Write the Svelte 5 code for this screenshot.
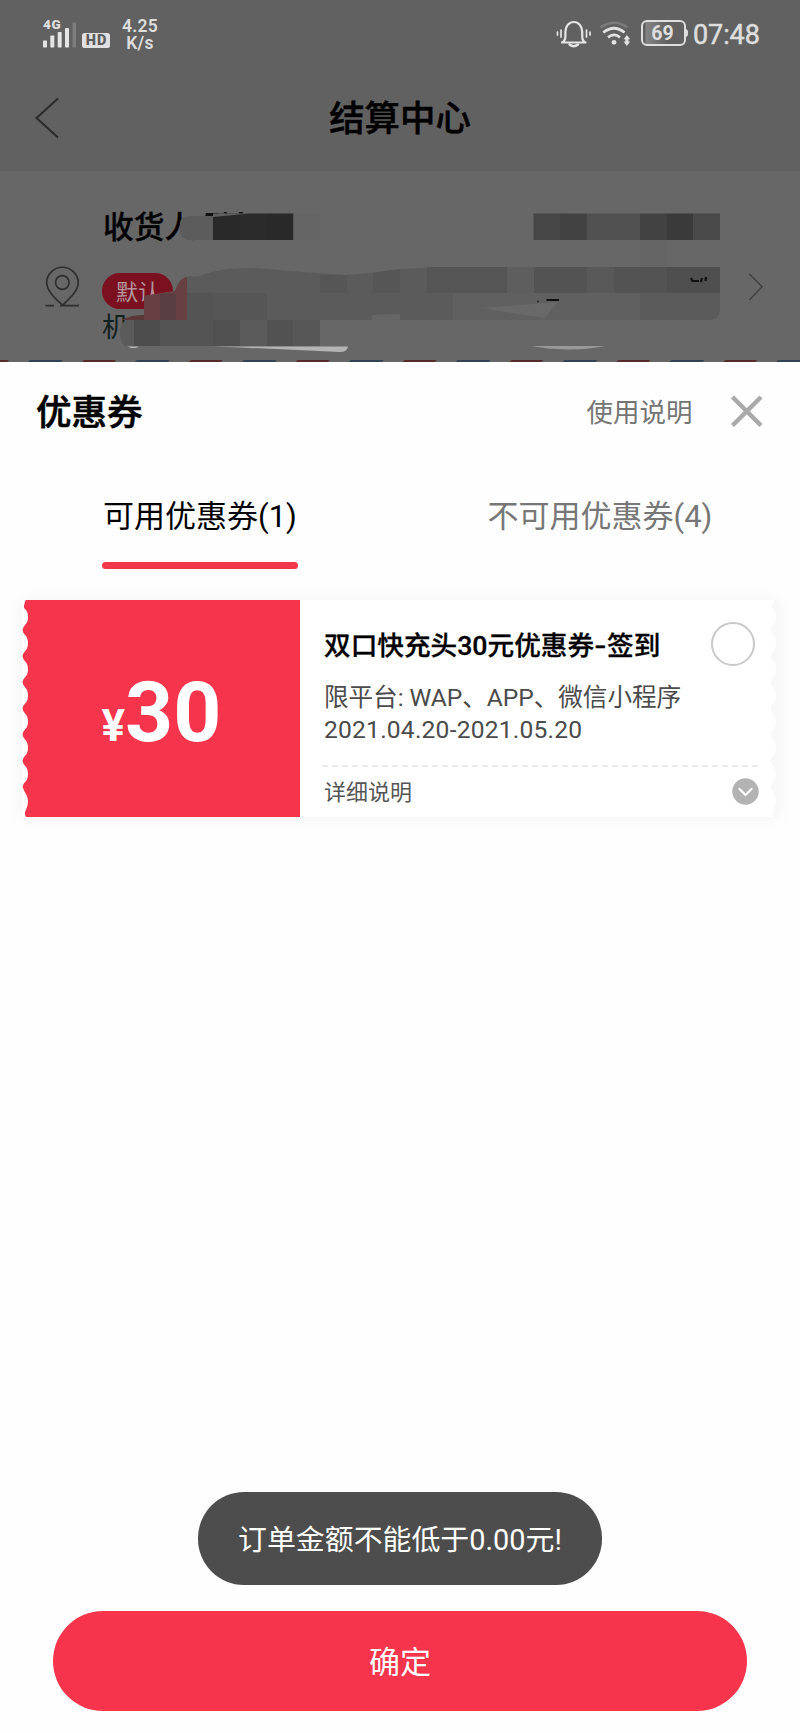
<script>
  const bars = [
    { x: 0, h: 7 },
    { x: 7.3, h: 12 },
    { x: 14.7, h: 15.5 },
    { x: 22, h: 19.5 }
  ];
  const tabs = [
    { label: '可用优惠券(1)', active: true },
    { label: '不可用优惠券(4)', active: false }
  ];
  // Redaction tiles over the recipient block: x, y, width, height, colour
  const tiles = [
    [213, 213.5, 27, 26.5, '#292929'], [240, 213.5, 27, 26.5, '#2b2b2b'], [267, 213.5, 26.5, 26.5, '#292929'],
    [293.5, 214, 26, 26, '#656565'],
    [533.5, 213.5, 27, 26.5, '#464646'], [560, 213.5, 27, 26.5, '#424242'], [587, 213.5, 53, 26.5, '#505050'],
    [640, 213.5, 27, 26.5, '#424242'], [667, 213.5, 26.5, 26.5, '#3a3a3a'], [693, 213.5, 27, 26.5, '#4a4a4a'],
    [640, 240, 27, 27, '#656565']
  ];
  // The scalloped edge of the coupon, drawn bottom to top
  const cusps = [207, 180.8, 154.6, 128.5, 102.3, 76.2, 50].map((v) => v - 20);
  const edge = () => {
    let d = 'L4 217 Q2 214 3.5 211 Q8 202 4.5 195 Q2 191 0.8 187.5';
    for (let i = 0; i < cusps.length; i++) {
      const y = cusps[i];
      const n = i < cusps.length - 1 ? cusps[i + 1] : 4;
      const m = (y + n) / 2;
      const x = i < cusps.length - 1 ? 0.5 : 2.5;
      d += ` L0.5 ${y} Q1 ${y - 3} 3 ${y - 5} C7 ${m + 5} 7 ${m - 5} 3 ${n + 5} Q1 ${n + 3} ${x} ${n}`;
    }
    return d + ' Q2.6 1 4 0';
  };
  const red = `M278 0 L278 217 ${edge()} Z`;
</script>

<div class="page">
  <div class="top">
    <div class="status">
      <div class="signal">
        <span class="net">4G</span>
        <svg width="34" height="27" viewBox="0 0 34 27">
          {#each bars as b}
            <rect x={b.x} y={25.5 - b.h} width="4" height={b.h} rx="0.7" fill="#e4e4e4" />
          {/each}
          <rect x="29.5" y="0.5" width="3.5" height="25" fill="#7d7d7d" />
        </svg>
      </div>
      <div class="hd">HD</div>
      <div class="speed"><span>4.25</span><span>K/s</span></div>
      <svg class="bell" width="36" height="30" viewBox="0 0 36 30" fill="none" stroke="#e6e6e6" stroke-width="2.2" stroke-linecap="round">
        <path d="M7 23.5H30.5C28.3 22.5 27.2 20.5 27.2 17V12.5A8.4 9.5 0 0 0 10.4 12.5V17C10.4 20.5 9.2 22.5 7 23.5Z" stroke-linejoin="round" />
        <path d="M14.5 25.5Q18.8 29 23 25.5" stroke-width="2.4" />
        <path d="M6 11V18M31.5 11V18M2.5 13V16M35 13V16" stroke-width="1.7" />
      </svg>
      <svg class="wifi" width="32" height="26" viewBox="0 0 32 26" fill="none">
        <path d="M1.5 6.5Q15 -3 28.5 6.5" stroke="#7c7c7c" stroke-width="2.5" />
        <path d="M4.3 11.5Q15 3 25.5 11.5" stroke="#e2e2e2" stroke-width="2.8" />
        <path d="M9 16.3Q15 11.5 21 16.3" stroke="#e2e2e2" stroke-width="2.8" />
        <circle cx="15" cy="21.3" r="2.4" fill="#e2e2e2" />
        <path d="M27.9 14L31.2 18.2H29.4V20.4H31.2L27.9 25L24.6 20.4H26.4V18.2H24.6Z" fill="#e2e2e2" />
      </svg>
      <div class="battery">69</div>
      <span class="time">07:48</span>
    </div>
    <div class="nav">
      <svg width="24" height="42" viewBox="0 0 24 42" fill="none" stroke="#2b2b2b" stroke-width="2"><path d="M22 1.5L0.5 21L22 40.5" /></svg>
      <h1>结算中心</h1>
    </div>
  </div>

  <div class="address">
    <svg class="pin" width="36" height="42" viewBox="0 0 36 42" fill="none" stroke="#2f2f2f" stroke-width="1.7">
      <path d="M17.5 39.3C11 33 1.7 25 1.7 16.7A15.7 15.4 0 0 1 33.2 16.7C33.2 25 24 33 17.5 39.3Z" />
      <circle cx="17.3" cy="16.5" r="6.8" />
      <path d="M0.5 39.7H9M15 39.7H34" />
    </svg>
    <div class="recipient">
      <div class="name">收货人</div>
      <div class="badge">默认</div>
      <div class="street">机</div>
    </div>
    <svg class="next" width="16" height="28" viewBox="0 0 16 28" fill="none" stroke="#424242" stroke-width="1.5"><path d="M1.500 1L14 13.800L1.500 27" /></svg>

    <svg class="mosaic" width="800" height="191" viewBox="0 171 800 191">
      <path d="M206 213H218L217 217H205ZM224 212H227L226 217H223ZM239 212H243L242 216H239Z" fill="#111" />
      <path d="M180 222Q181 216 190 216H213V240H188Q178 238 180 222Z" fill="#5c5c5c" />
      {#each tiles as t}
        <rect x={t[0]} y={t[1]} width={t[2]} height={t[3]} fill={t[4]} />
      {/each}
      <path d="M213 213.500H250L213 217Z" fill="#606060" />
      <path d="M144 320V296L175 291Q180 276 190 276Q198 278 205 274Q225 267 255 268Q300 272 345 275Q365 274 400 269L440 267H720V310Q719 320 710 320H320V346H124Q119 338 120 328Q124 316 144 316Z" fill="#5b5b5b" />
      <path d="M144 296L175 291Q180 277 187 277V320H144Z" fill="#683f43" />
      <path d="M160 294H176V320H160Z" fill="#583e40" />
      <path d="M122 320Q130 315 144 315V320Z" fill="#5d383b" />
      <rect x="187" y="293" width="26" height="27" fill="#545454" />
      <rect x="213" y="293" width="54" height="27" fill="#565656" />
      <rect x="134" y="320" width="26" height="26" fill="#4d4d4d" />
      <rect x="160" y="320" width="53" height="26" fill="#545454" />
      <rect x="213" y="320" width="27" height="26" fill="#505050" />
      <rect x="267" y="320" width="26" height="26" fill="#525252" />
      <rect x="293" y="320" width="27" height="26" fill="#575757" />
      <rect x="320" y="275" width="27" height="18" fill="#565656" />
      <path d="M373 273L400 269V293H373Z" fill="#565656" />
      <rect x="427" y="267" width="80" height="26" fill="#555" />
      <rect x="507" y="267" width="27" height="26" fill="#5e5e5e" />
      <rect x="534" y="267" width="53" height="26" fill="#535353" />
      <rect x="587" y="267" width="27" height="26" fill="#595959" />
      <rect x="614" y="267" width="53" height="26" fill="#535353" />
      <rect x="667" y="267" width="53" height="26" fill="#4f4f4f" />
      <rect x="453" y="293" width="187" height="27" fill="#606060" />
      <path d="M483 308L557 302L545 318L518 314Z" fill="#696969" />
      <path d="M372 315L400 314V320H372Z" fill="#666" />
      <path d="M691 278L692.500 281H699M702 278L701 282M706 277L705.500 281M546.500 300H559" stroke="#111" stroke-width="2.200" fill="none" />
      <circle cx="538" cy="301.500" r="1" fill="#222" />
      <path d="M128 346.500H139L136 348H131Z M213 346.500H348Q347 352 340 352Q280 349 213 346.500Z" fill="#b4b4b4" />
      <path d="M531 346H605Q585 350 567 349.500Q547 349 531 346Z" fill="#999" />
      {#each Array(8) as _, i}
        <path d={`M${i * 106.9 - 23} 360H${i * 106.9 + 9}L${i * 106.9 + 7} 362H${i * 106.9 - 25}Z`} fill="#572a2b" />
        <path d={`M${i * 106.9 + 30} 360H${i * 106.9 + 63}L${i * 106.9 + 61} 362H${i * 106.9 + 28}Z`} fill="#344354" />
      {/each}
    </svg>
  </div>

  <div class="sheet">
    <div class="head">
      <h2>优惠券</h2>
      <span class="help">使用说明</span>
      <svg width="32" height="32" viewBox="0 0 32 32" stroke="#a9a9a9" stroke-width="4.500"><path d="M1.500 1L30 29.500M30 1L1.500 29.500" /></svg>
    </div>
    <div class="tabs">
      {#each tabs as t}
        <div class="tab" class:active={t.active}><span>{t.label}</span></div>
      {/each}
    </div>

    <div class="coupon">
      <div class="value">
        <svg class="ticket" width="278" height="217" viewBox="0 0 278 217"><path d={red} fill="#f6344b" /></svg>
        <span class="yen">¥</span><span class="amount">30</span>
      </div>
      <div class="info">
        <div class="row">
          <h3>双口快充头30元优惠券<i>-</i>签到</h3>
          <span class="radio"></span>
        </div>
        <p class="platform">限平台: WAP、APP、微信小程序</p>
        <p class="date">2021.04.20-2021.05.20</p>
        <div class="detail">
          <span>详细说明</span>
          <svg width="27" height="27" viewBox="0 0 27 27"><circle cx="13.500" cy="13.500" r="13.200" fill="#b3b3b3" /><path d="M7.500 11L13.500 17L19.500 11" fill="none" stroke="#fff" stroke-width="2.200" stroke-linecap="round" /></svg>
        </div>
      </div>
      <svg class="rim" width="8" height="217" viewBox="0 0 8 217">
        <path d={`M8 0 V217 ${edge()} Z`} fill="#f8f8f8" />
      </svg>
    </div>

    <div class="footer">
      <div class="toast">订单金额不能低于0.00元!</div>
      <div class="confirm">确定</div>
    </div>
  </div>
</div>

<style>
  :global(body) { margin: 0; background: #fefefe; }
  .page { width: 800px; height: 1733px; display: flex; flex-direction: column; font-family: Roboto, 'Noto Sans CJK SC', sans-serif; color: #000; overflow: hidden; }
  .page * { box-sizing: border-box; }
  h1, h2, h3, p { margin: 0; }
  svg { display: block; flex: none; overflow: visible; }
  span { white-space: nowrap; }

  .top { height: 171px; background: #616161; flex: none; }
  .status { height: 68px; padding: 18px 40px 0 43px; display: flex; align-items: flex-start; color: #dedede; }
  .signal { width: 34px; height: 32px; display: grid; flex: none; }
  .signal > * { grid-area: 1 / 1; }
  .signal svg { margin-top: 4px; }
  .net { font: 900 13.500px/13px Roboto, sans-serif; letter-spacing: 0.600px; }
  .hd { margin: 15px 0 0 5px; width: 28px; height: 15px; border-radius: 2.500px; background: #e0e0e0; color: #5c5c5c; font: 900 14.500px/15px Roboto, sans-serif; letter-spacing: 1px; text-align: center; padding-left: 1px; }
  .speed { width: 44px; margin-left: 8px; display: flex; flex-direction: column; align-items: center; font-weight: 600; font-size: 17.500px; line-height: 16.500px; letter-spacing: 0.300px; }
  .bell { margin: 1px 0 0 auto; }
  .wifi { margin: 3px 0 0 8px; }
  .battery { position: relative; margin: 2px 0 0 10px; width: 45px; height: 26px; border: 2px solid #dedede; border-radius: 6px; font-weight: 700; font-size: 19.500px; line-height: 24px; text-align: center; padding-right: 2px; background: linear-gradient(90deg, transparent 2px, #858585 3px, #616161 24px); }
  .battery::after { content: ''; position: absolute; right: -4px; top: 7px; width: 3px; height: 8px; border-radius: 0 3px 3px 0; background: #dedede; }
  .time { width: 67px; margin-left: 7px; font-size: 27px; font-weight: 400; line-height: 34px; letter-spacing: -0.100px; -webkit-text-stroke: 0.500px #dedede; }
  .nav { height: 100px; padding: 0 36px; display: grid; grid-template-columns: 24px 1fr 24px; align-items: center; }
  h1 { font-size: 35.400px; font-weight: 500; line-height: 50px; text-align: center; -webkit-text-stroke: 0.500px #000; padding-top: 2px; }

  .address { position: relative; height: 191px; background: #676767; display: flex; flex: none; padding: 0 36px 0 45px; }
  .pin { margin-top: 95px; }
  .recipient { margin: 36px 0 0 21px; flex: 1; }
  .name { font-size: 30.700px; line-height: 42px; font-weight: 500; -webkit-text-stroke: 0.300px #000; padding-left: 1px; }
  .badge { margin-top: 24px; width: 71px; height: 36px; border-radius: 18px; background: #7b1021; color: #b5969b; font-size: 22px; line-height: 39px; padding-left: 14px; }
  .street { font-size: 27px; line-height: 38px; color: #10201d; }
  .next { margin-top: 102px; }
  .mosaic { position: absolute; left: 0; top: 0; }

  .sheet { flex: 1; background: #fefefe; display: flex; flex-direction: column; }
  .head { height: 99px; padding: 0 37.500px 0 36px; display: flex; align-items: center; }
  h2 { font-size: 35.500px; line-height: 50px; font-weight: 500; -webkit-text-stroke: 0.600px #000; flex: 1; padding-top: 3px; }
  .help { font-size: 26.500px; line-height: 40px; color: #757575; margin-right: 38px; padding-top: 2px; }
  .tabs { display: grid; grid-template-columns: 1fr 1fr; height: 109px; padding-top: 1px; }
  .tab { display: flex; flex-direction: column; align-items: center; font-size: 31px; color: #777; }
  .tab span { line-height: 44px; margin-top: 33px; }
  .active { color: #000; }
  .active::after { content: ''; width: 196px; height: 7px; margin-top: 23px; border-radius: 3.500px; background: #f0374b; }
  .coupon { margin: 30px 22px 0; height: 217px; width: 756px; display: flex; box-shadow: 0 0 18px rgba(0, 0, 0, 0.050); position: relative; flex: none; }
  .value { position: relative; width: 278px; display: flex; justify-content: center; align-items: baseline; color: #fff; font-weight: 700; padding: 59px 0 0 1px; flex: none; }
  .ticket { position: absolute; inset: 0; }
  .yen { position: relative; font-size: 44px; line-height: 100px; }
  .amount { position: relative; font-size: 84px; line-height: 108px; }
  .info { flex: 1; padding: 22px 23px 0 24px; background: #fff; }
  .row { display: flex; justify-content: space-between; height: 48px; }
  h3 { font-size: 26.650px; line-height: 48px; font-weight: 500; -webkit-text-stroke: 0.300px #000; white-space: nowrap; }
  i { display: inline-block; font-style: normal; transform: scaleX(1.300); width: 13px; text-align: center; }
  .radio { width: 44px; height: 44px; border: 2px solid #c9c9c9; border-radius: 50%; flex: none; }
  p { white-space: nowrap; color: #4b4b4b; font-size: 24.600px; line-height: 32px; }
  .platform { margin-top: 12px; letter-spacing: -0.050px; }
  .date { letter-spacing: 0.210px; }
  .detail { margin: 19px -4px 0 -2px; padding: 0 0 1px 2px; display: flex; align-items: center; justify-content: space-between; height: 53px; font-size: 22px; line-height: 30px; color: #555; background: repeating-linear-gradient(90deg, #ebebeb 0 6px, transparent 6px 10px) top / 100% 2px no-repeat; }
  .detail span { padding-top: 3px; }
  .rim { position: absolute; right: 0; top: 0; }
  .footer { margin-top: auto; padding-bottom: 22px; display: flex; flex-direction: column; align-items: center; }
  .toast { width: 404px; height: 93px; border-radius: 46px; background: #4d4d4d; color: #fff; font-size: 28.900px; line-height: 96px; text-align: center; }
  .confirm { width: 694px; height: 100px; margin-top: 26px; border-radius: 50px; background: #f6344b; color: #fff; font-size: 31px; line-height: 103px; text-align: center; }
</style>
